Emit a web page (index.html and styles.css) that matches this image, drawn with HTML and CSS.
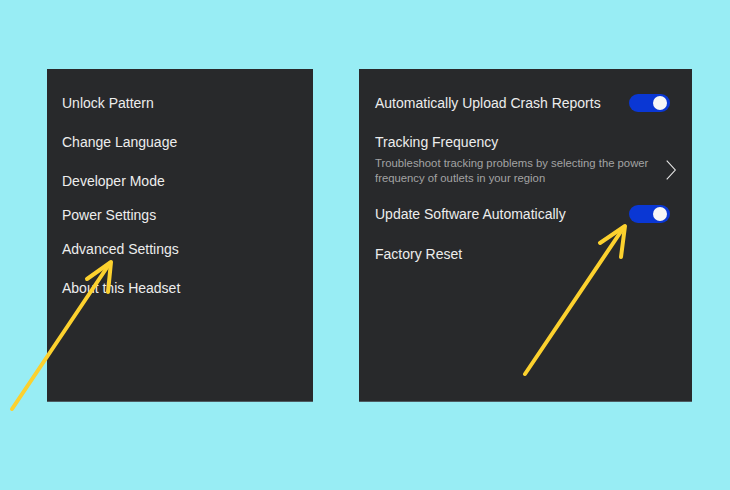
FILE: index.html
```
<!DOCTYPE html>
<html lang="en">
<head>
    <meta charset="UTF-8">
    <meta name="viewport" content="width=device-width, initial-scale=1.0">
    <title>Headset Settings</title>
    <link rel="stylesheet" href="styles.css">
</head>
<body>
    <div class="panels">
        <div class="panel panel-menu">
            <div class="menu-item">Unlock Pattern</div>
            <div class="menu-item">Change Language</div>
            <div class="menu-item">Developer Mode</div>
            <div class="menu-item tight">Power Settings</div>
            <div class="menu-item tight">Advanced Settings</div>
            <div class="menu-item">About this Headset</div>
        </div>

        <div class="panel panel-options">
            <div class="option">
                <span class="option-label">Automatically Upload Crash Reports</span>
                <span class="toggle on"></span>
            </div>
            <div class="option">
                <div class="option-text">
                    <div class="option-label">Tracking Frequency</div>
                    <div class="option-desc">Troubleshoot tracking problems by selecting the power frequency of outlets in your region</div>
                </div>
                <svg class="chevron" width="14" height="24" viewBox="0 0 14 24">
                    <polyline points="2,1 12,12 2,23" fill="none" stroke="#e6e6e6" stroke-width="1.3"/>
                </svg>
            </div>
            <div class="option after-desc">
                <span class="option-label">Update Software Automatically</span>
                <span class="toggle on"></span>
            </div>
            <div class="option">
                <span class="option-label">Factory Reset</span>
            </div>
        </div>
    </div>

    <!-- hand drawn annotation arrows -->
    <svg class="arrows" width="730" height="490" viewBox="0 0 730 490">
        <g fill="none" stroke="#fcd12e" stroke-width="4" stroke-linecap="round" stroke-linejoin="round">
            <path d="M12 409 L110 263"/>
            <path d="M87 279 L111 262 L108 292"/>
            <path d="M525 374 L624 227"/>
            <path d="M600 243 L625 226 L621 257"/>
        </g>
    </svg>
</body>
</html>
```

FILE: styles.css
```
body {
    margin: 0;
    width: 730px;
    height: 490px;
    background: #98edf4;
    font-family: "Liberation Sans", Arial, sans-serif;
    position: relative;
    overflow: hidden;
}
.panels {
    display: flex;
    gap: 46px;
    padding: 69px 0 0 47px;
}
.panel {
    background: #28292b;
    height: 333px;
    box-sizing: border-box;
    border-bottom: 1px solid #4d5c62;
    color: #ededed;
    font-size: 14px;
    line-height: 16px;
}
.panel-menu {
    width: 266px;
    padding: 3px 15px 0;
}
.menu-item {
    margin-top: 23px;
}
.menu-item.tight {
    margin-top: 18px;
}
.panel-options {
    width: 333px;
    padding: 3px 22px 0 16px;
}
.option {
    display: flex;
    align-items: center;
    justify-content: space-between;
    min-height: 18px;
    margin-top: 22px;
}
.option.after-desc {
    margin-top: 19px;
}
.option-desc {
    margin-top: 6px;
    font-size: 11.3px;
    line-height: 15px;
    color: #a3a3a3;
    width: 290px;
}
.chevron {
    margin-right: -7px;
    margin-top: 20px;
}
.toggle {
    width: 41px;
    height: 18px;
    border-radius: 9px;
    background: #0a37d4;
    position: relative;
}
.toggle::after {
    content: "";
    position: absolute;
    top: 2px;
    right: 3px;
    width: 14px;
    height: 14px;
    border-radius: 50%;
    background: #f7f7f7;
}
.arrows {
    position: absolute;
    top: 0;
    left: 0;
    pointer-events: none;
}
```
